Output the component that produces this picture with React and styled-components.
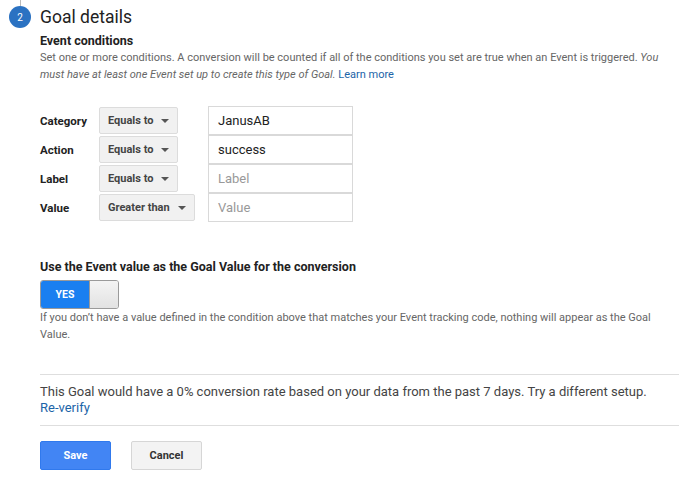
import React from "react"
import styled, { createGlobalStyle } from "styled-components"

const GlobalStyle = createGlobalStyle`
  body {
    margin: 0;
    background: #fff;
    font-family: Roboto, "Liberation Sans", Arial, sans-serif;
    color: #222;
  }
`

const Page = styled.div`
  position: relative;
  width: 683px;
  height: 480px;
  overflow: hidden;
`

const Header = styled.div`
  display: flex;
  align-items: center;
  gap: 9px;
  padding: 6px 0 0 9px;
  height: 22px;
`

const StepLine = styled.div`
  position: absolute;
  left: 20px;
  top: 0;
  width: 1px;
  height: 6px;
  background: #bbb;
`

const StepBadge = styled.div`
  width: 22px;
  height: 22px;
  border-radius: 50%;
  background: #2b72c2;
  color: #fff;
  font-size: 10px;
  display: flex;
  align-items: center;
  justify-content: center;
`

const Title = styled.h2`
  margin: 0;
  font-size: 17.5px;
  font-weight: 400;
  color: #222;
`

const Body = styled.div`
  padding: 5px 4px 0 40px;
`

const SectionTitle = styled.div`
  font-size: 12.5px;
  font-weight: 700;
  color: #222;
  line-height: 16px;
`

const Help = styled.p`
  margin: 0;
  font-size: 11px;
  line-height: 17px;
  color: #666;

  em {
    font-style: italic;
  }
`

const Link = styled.a`
  color: #1c64a8;
  text-decoration: none;
`

const Conditions = styled.div`
  display: flex;
  flex-direction: column;
  margin-top: 23px;
`

const Row = styled.div`
  display: grid;
  grid-template-columns: 59px 109px 145px;
  align-items: center;
  height: 29px;
`

const RowLabel = styled.div`
  font-size: 11.5px;
  font-weight: 700;
  color: #222;
`

const Select = styled.div`
  justify-self: start;
  height: 27px;
  box-sizing: border-box;
  display: flex;
  align-items: center;
  gap: 8px;
  padding: 0 8px;
  background: #f1f1f1;
  border: 1px solid #dcdcdc;
  border-radius: 2px;
  font-size: 11px;
  font-weight: 700;
  color: #444;
`

const Caret = styled.span`
  width: 0;
  height: 0;
  border-left: 4px solid transparent;
  border-right: 4px solid transparent;
  border-top: 4px solid #555;
`

const Input = styled.div`
  height: 29px;
  box-sizing: border-box;
  border: 1px solid #d9d9d9;
  margin-top: -1px;
  display: flex;
  align-items: center;
  padding: 0 9px;
  font-size: 13px;
  color: ${({ placeholder }) => (placeholder ? "#999" : "#222")};
`

const ValueTitle = styled(SectionTitle)`
  margin-top: 37px;
`

const Toggle = styled.div`
  display: flex;
  width: 79px;
  height: 29px;
  margin-top: 5px;
  border-radius: 3px;
  overflow: hidden;
  border: 1px solid #9a9a9a;
  box-sizing: border-box;
`

const ToggleOn = styled.div`
  width: 48px;
  background: #1a7ff0;
  color: #fff;
  font-size: 10.5px;
  font-weight: 700;
  display: flex;
  align-items: center;
  justify-content: center;
`

const ToggleKnob = styled.div`
  flex: 1;
  background: linear-gradient(#f4f4f4, #e2e2e2);
  border-left: 1px solid #9a9a9a;
`

const Divider = styled.div`
  height: 1px;
  background: #dedede;
  margin-top: ${({ gap }) => gap || 0}px;
`

const Verify = styled.div`
  padding: 9px 0 9px;
  font-size: 13px;
  line-height: 16px;
  color: #444;
`

const Actions = styled.div`
  display: flex;
  gap: 20px;
  margin-top: 15px;
`

const Button = styled.button`
  width: 71px;
  height: 29px;
  border-radius: 2px;
  font-family: inherit;
  font-size: 11px;
  font-weight: 700;
  cursor: pointer;
  border: 1px solid ${({ primary }) => (primary ? "#3079ed" : "#d6d6d6")};
  background: ${({ primary }) => (primary ? "#4285f4" : "#f3f3f3")};
  color: ${({ primary }) => (primary ? "#fff" : "#333")};
`

const conditions = [
  { label: "Category", op: "Equals to", value: "JanusAB" },
  { label: "Action", op: "Equals to", value: "success" },
  { label: "Label", op: "Equals to", placeholder: "Label" },
  { label: "Value", op: "Greater than", placeholder: "Value" },
]

const App = () => {
  return (
    <Page>
      <GlobalStyle />
      <StepLine />
      <Header>
        <StepBadge>2</StepBadge>
        <Title>Goal details</Title>
      </Header>
      <Body>
        <SectionTitle>Event conditions</SectionTitle>
        <Help>
          Set one or more conditions. A conversion will be counted if all of the conditions you set are
          true when an Event is triggered. <em>You must have at least one Event set up to create this type
          of Goal.</em> <Link href="#">Learn more</Link>
        </Help>

        <Conditions>
          {conditions.map((c) => (
            <Row key={c.label}>
              <RowLabel>{c.label}</RowLabel>
              <Select>
                {c.op}
                <Caret />
              </Select>
              <Input placeholder={c.placeholder}>{c.value || c.placeholder}</Input>
            </Row>
          ))}
        </Conditions>

        <ValueTitle>Use the Event value as the Goal Value for the conversion</ValueTitle>
        <Toggle>
          <ToggleOn>YES</ToggleOn>
          <ToggleKnob />
        </Toggle>
        <Help>
          If you don’t have a value defined in the condition above that matches your Event tracking code,
          nothing will appear as the Goal Value.
        </Help>

        <Divider gap={31} />
        <Verify>
          This Goal would have a 0% conversion rate based on your data from the past 7 days. Try a different
          setup.
          <br />
          <Link href="#">Re-verify</Link>
        </Verify>
        <Divider />

        <Actions>
          <Button primary>Save</Button>
          <Button>Cancel</Button>
        </Actions>
      </Body>
    </Page>
  )
}

export default App
